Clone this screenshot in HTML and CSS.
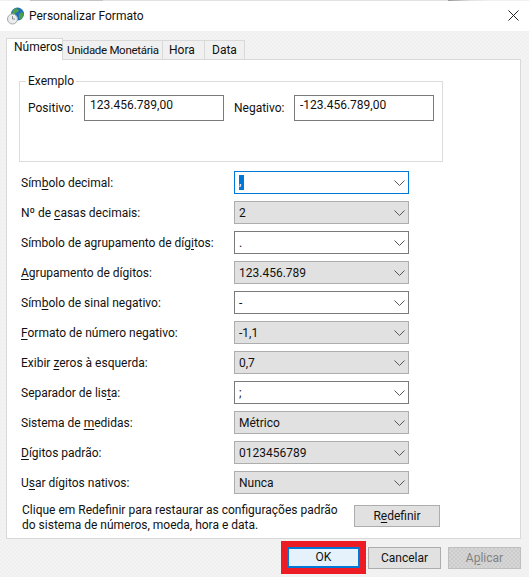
FILE: index.html
```html
<html>

<head>
    <meta charset="utf-8">
    <link rel="stylesheet" href="styles.css">
</head>

<body>
    <div id="titlebar">
        <svg class="appicon" width="18" height="18" viewBox="0 0 18 18">
            <circle cx="10.5" cy="7" r="6.5" fill="#1f6fb8" />
            <path d="M6 3l3-2 3 2-1 2-3 1-1 3-2-2z M12 7l3-2 2 3-3 5-2-2z" fill="#4f9e4a" />
            <circle cx="5.5" cy="12" r="5" fill="#e9edf0" stroke="#a4a8ac" />
            <path d="M5.5 9v3h2.5" fill="none" stroke="#777" stroke-width="0.8" />
        </svg>
        <span id="title">Personalizar Formato</span>
        <svg class="closeicon" width="11" height="11" viewBox="0 0 11 11">
            <path d="M0.5 0.5l10 10M10.5 0.5l-10 10" stroke="#222" stroke-width="1" fill="none" />
        </svg>
    </div>

    <div id="content">
        <div id="tabs">
            <div class="tab active">Números</div>
            <div class="tab">Unidade Monetária</div>
            <div class="tab">Hora</div>
            <div class="tab">Data</div>
        </div>

        <div id="panel">
            <div id="group">
                <span id="legend">Exemplo</span>
                <div class="samples">
                    <span class="samplelabel first">Positivo:</span>
                    <div class="samplebox">123.456.789,00</div>
                    <span class="samplelabel second">Negativo:</span>
                    <div class="samplebox">-123.456.789,00</div>
                </div>
            </div>

            <div id="rows">
                <div class="row">
                    <label>Sím<u>b</u>olo decimal:</label>
                    <div class="combo edit focus"><span class="selected">,</span></div>
                </div>
                <div class="row">
                    <label>Nº de <u>c</u>asas decimais:</label>
                    <div class="combo">2</div>
                </div>
                <div class="row">
                    <label>Símbolo de agrupamento de díg<u>i</u>tos:</label>
                    <div class="combo edit">.</div>
                </div>
                <div class="row">
                    <label><u>A</u>grupamento de dígitos:</label>
                    <div class="combo">123.456.789</div>
                </div>
                <div class="row">
                    <label>Sím<u>b</u>olo de sinal negativo:</label>
                    <div class="combo edit">-</div>
                </div>
                <div class="row">
                    <label><u>F</u>ormato de número negativo:</label>
                    <div class="combo">-1,1</div>
                </div>
                <div class="row">
                    <label>Exibir <u>z</u>eros à esquerda:</label>
                    <div class="combo">0,7</div>
                </div>
                <div class="row">
                    <label>Separador de lis<u>t</u>a:</label>
                    <div class="combo edit">;</div>
                </div>
                <div class="row">
                    <label>Sistema de <u>m</u>edidas:</label>
                    <div class="combo">Métrico</div>
                </div>
                <div class="row">
                    <label><u>D</u>ígitos padrão:</label>
                    <div class="combo">0123456789</div>
                </div>
                <div class="row">
                    <label>U<u>s</u>ar dígitos nativos:</label>
                    <div class="combo">Nunca</div>
                </div>
            </div>

            <div id="reset">
                <p>Clique em Redefinir para restaurar as configurações padrão<br>do sistema de números, moeda, hora e data.</p>
                <div class="btn resetbtn">R<u>e</u>definir</div>
            </div>
        </div>

        <div id="footer">
            <div id="okmark">
                <div class="btn ok">OK</div>
            </div>
            <div class="btn">Cancelar</div>
            <div class="btn disabled">A<u>p</u>licar</div>
        </div>
    </div>

    <script>
        // seta de cada combo
        const arrow = '<svg class="arrow" width="11" height="6" viewBox="0 0 11 6"><path d="M0.5 0.5l5 5 5-5" fill="none" stroke="#555" stroke-width="1"/></svg>';
        document.querySelectorAll('.combo').forEach((c) => {
            c.insertAdjacentHTML('beforeend', arrow);
        });
    </script>
</body>

</html>
```
FILE: styles.css
```css
* {
    box-sizing: border-box;
}

body {
    margin: 0;
    width: 529px;
    height: 577px;
    overflow: hidden;
    font-family: Roboto, sans-serif;
    font-size: 12px;
    color: #111111;
    background-color: #f0f0f0;
}

u {
    text-underline-offset: 2px;
}

#titlebar {
    height: 31px;
    background-color: white;
    background-image: linear-gradient(to right, #f0f0f0 30px, #c4c4c4 30px 103px, #e2e2e2 103px 448px, #999999 448px, #e2e2e2 470px, #f0f0f0 490px);
    background-size: 100% 1px;
    background-repeat: no-repeat;
    display: flex;
    align-items: center;
    padding: 0 10px 0 7px;
}

.appicon {
    margin-right: 4px;
}

#title {
    font-size: 12px;
    flex: 1;
}

#content {
    padding: 7px 8px 0 6px;
    background-color: #f0f0f0;
    background-image: conic-gradient(#f3f3f3 25%, transparent 0 50%, #f3f3f3 0 75%, transparent 0);
    background-size: 4px 4px;
    height: 546px;
}

#tabs {
    display: flex;
    align-items: flex-end;
    height: 21px;
    position: relative;
    z-index: 1;
    white-space: nowrap;
}

.tab {
    height: 19px;
    line-height: 18px;
    background-color: #f0f0f0;
    border: 1px solid #d9d9d9;
    border-left: none;
    border-bottom: none;
}

.tab:nth-child(2) {
    width: 100px;
    padding-left: 4px;
    font-size: 11.5px;
    letter-spacing: -0.3px;
}

.tab:nth-child(3) {
    width: 42px;
    padding-left: 6px;
}

.tab:nth-child(4) {
    width: 40px;
    padding-left: 7px;
}

.tab.active {
    width: 57px;
    height: 22px;
    line-height: 17px;
    margin-bottom: -1px;
    padding: 0 7px;
    background-color: white;
    border-left: 1px solid #d9d9d9;
}

#panel {
    width: 515px;
    height: 480px;
    background-color: white;
    border: 1px solid #d9d9d9;
    padding: 21px 12px 0 12px;
}

#group {
    width: 424px;
    height: 81px;
    border: 1px solid #dcdcdc;
    padding: 0 8px;
    position: relative;
}

#legend {
    position: absolute;
    top: -8px;
    left: 6px;
    padding: 0 2px;
    background-color: white;
}

.samples {
    display: flex;
    align-items: center;
    padding-top: 13px;
}

.samplelabel.first {
    width: 56px;
}

.samplelabel.second {
    width: 70px;
    padding-left: 10px;
}

.samplebox {
    width: 140px;
    height: 26px;
    border: 1px solid #7a7a7a;
    padding: 1px 0 0 5px;
    line-height: 16px;
}

#rows {
    display: flex;
    flex-direction: column;
    gap: 7px;
    margin-top: 9px;
    padding-left: 2px;
}

.row {
    display: flex;
    align-items: center;
    height: 23px;
}

.row label {
    width: 213px;
}

.combo {
    width: 175px;
    height: 23px;
    line-height: 21px;
    padding: 1px 0 0 4px;
    border: 1px solid #adadad;
    background-color: #e1e1e1;
    display: flex;
    align-items: center;
    position: relative;
}

.combo.edit {
    background-color: white;
    border-color: #7a7a7a;
}

.combo.focus {
    padding-top: 0;
    border-color: #0078d7;
}

.selected {
    width: 5px;
    height: 15px;
    line-height: 13px;
    background-color: #0078d7;
    color: white;
}

.arrow {
    position: absolute;
    right: 3px;
    top: 8px;
}

#reset {
    display: flex;
    margin-top: 9px;
    padding-left: 3px;
}

#reset p {
    margin: 0;
    width: 332px;
    line-height: 15px;
}

.btn {
    width: 73px;
    height: 22px;
    line-height: 20px;
    text-align: center;
    background-color: #e1e1e1;
    border: 1px solid #adadad;
}

.resetbtn {
    width: 86px;
    margin-top: 2px;
}

#footer {
    display: flex;
    justify-content: flex-end;
    align-items: center;
    gap: 7px;
    height: 35px;
    margin-top: 1px;
}

#okmark {
    border: 6px solid #ed1c24;
    margin-right: -5px;
    height: 33px;
    width: 85px;
}

.btn.ok {
    width: 73px;
    height: 21px;
    line-height: 17px;
    background-color: #e5f1fb;
    border: 2px solid #0078d7;
}

.btn.disabled {
    color: #838383;
    background-color: #cccccc;
    background-image: conic-gradient(#d6d6d6 25%, transparent 0 50%, #d6d6d6 0 75%, transparent 0);
    background-size: 4px 4px;
    border-color: #bfbfbf;
}
```
